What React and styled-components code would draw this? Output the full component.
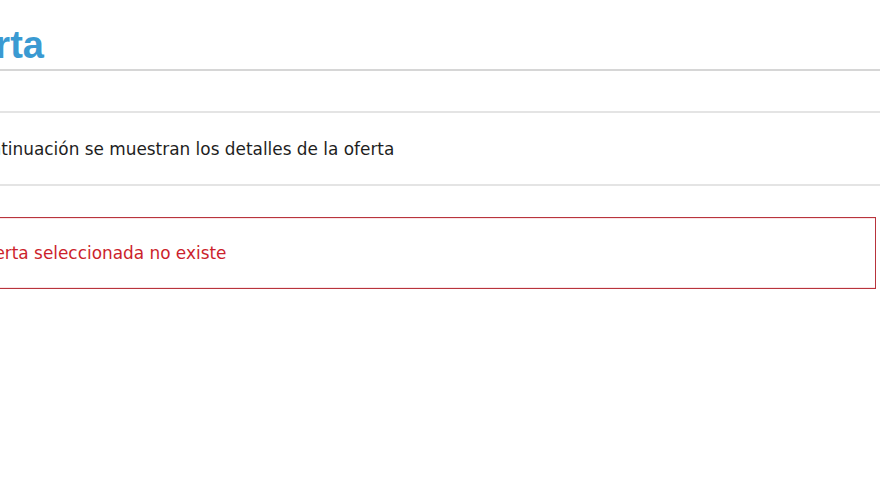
import React from "react";
import styled, { createGlobalStyle } from "styled-components";

const GlobalStyle = createGlobalStyle`
  html, body {
    margin: 0;
    padding: 0;
    background: #ffffff;
    overflow: hidden;
  }
`;

const Page = styled.div`
  display: flex;
  flex-direction: column;
  margin-left: -68px;
  width: 948px;
  font-family: Verdana, "DejaVu Sans", sans-serif;
  font-size: 16.9px;
  color: #1e1e1e;
`;

const Title = styled.h1`
  margin: 0;
  padding: 25px 0 4px;
  font-family: Arial, "Liberation Sans", sans-serif;
  font-size: 38px;
  line-height: 40px;
  font-weight: bold;
  color: #3a9ad2;
  border-bottom: 2px solid #d6d6d6;
`;

const Section = styled.div`
  height: ${(p) => p.$height}px;
  display: flex;
  align-items: center;
  padding-left: 22px;
  border-bottom: 2px solid #e4e4e4;
`;

const ErrorBox = styled.div`
  margin: 31px 4px 0 0;
  height: 70px;
  display: flex;
  align-items: center;
  padding-left: 20px;
  border: 1px solid #b8343c;
  box-shadow: inset 0 1px 0 #fbe3e6, inset 0 -1px 0 #fbe3e6;
  color: #cc1f2c;
`;

export default function App() {
  return (
    <>
      <GlobalStyle />
      <Page>
        <Title>Oferta</Title>
        <Section $height={40} />
        <Section $height={71}>
          A continuación se muestran los detalles de la oferta
        </Section>
        <ErrorBox>La oferta seleccionada no existe</ErrorBox>
      </Page>
    </>
  );
}
